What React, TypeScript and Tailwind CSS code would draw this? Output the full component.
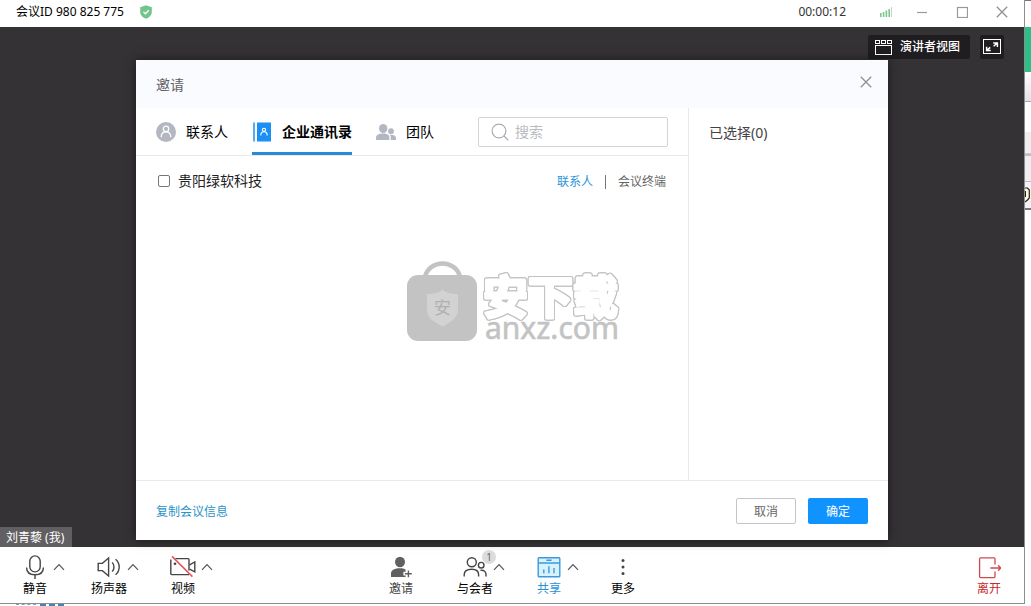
import { useState } from 'react'
import type { ReactNode } from 'react'
import clsx from 'clsx'

type TabId = 'contacts' | 'directory' | 'teams'

function ShieldIcon() {
  return (
    <svg className="w-3 h-3.5" viewBox="0 0 12 14">
      <path d="M6 0.3 11.8 2.2V7C11.8 10.4 9 12.6 6 13.8 3 12.6 0.2 10.4 0.2 7V2.2Z" fill="#72c48a" />
      <path d="M3.4 6.9 5.4 8.8 8.8 5.2" fill="none" stroke="#fff" strokeWidth="1.3" />
    </svg>
  )
}

function SignalIcon() {
  return (
    <svg className="w-3 h-2.5" viewBox="0 0 12 10">
      <path d="M0.8 10V6M3.6 10V5M6.4 10V3.5M9.2 10V2" stroke="#7cc58d" strokeWidth="1.6" />
      <path d="M11.5 10V0" stroke="#cfd2d0" strokeWidth="1" />
    </svg>
  )
}

function CloseIcon() {
  return (
    <svg className="w-3 h-3" viewBox="0 0 12 12">
      <path d="M0.8 0.8 11.2 11.2M11.2 0.8 0.8 11.2" fill="none" stroke="#8f8f94" strokeWidth="1.3" />
    </svg>
  )
}

function MinimizeIcon() {
  return (
    <svg className="w-3 h-3" viewBox="0 0 12 12">
      <path d="M1 6.5H11" stroke="#999" strokeWidth="1.2" />
    </svg>
  )
}

function MaximizeIcon() {
  return (
    <svg className="w-3 h-3" viewBox="0 0 12 12">
      <rect x="1.5" y="1.5" width="10" height="10" fill="none" stroke="#999" strokeWidth="1.2" />
    </svg>
  )
}

function SpeakerViewIcon() {
  return (
    <svg className="w-[18px] h-4" viewBox="0 0 18 16" fill="none" stroke="#fff" strokeWidth="1">
      <rect x="1.5" y="1.5" width="4" height="3" />
      <rect x="7.5" y="1.5" width="4" height="3" />
      <rect x="13.5" y="1.5" width="4" height="3" />
      <rect x="1.5" y="6.5" width="16" height="9" />
    </svg>
  )
}

function ExpandIcon() {
  return (
    <svg className="w-[18px] h-4" viewBox="0 0 18 16" fill="none" stroke="#fff">
      <rect x="0.5" y="0.5" width="17" height="14" />
      <path d="M10.2 3.9H14.4V8M14.2 4.1 10.6 7.3" strokeWidth="1.5" />
      <path d="M3.6 7.8V11.6H7.8M3.8 11.4 7.2 8.4" strokeWidth="1.5" />
    </svg>
  )
}

function ContactIcon() {
  return (
    <svg className="w-5 h-5" viewBox="0 0 20 20">
      <circle cx="10" cy="10" r="10" fill="#b2b7c1" />
      <g fill="none" stroke="#fff" strokeWidth="1.3">
        <circle cx="10" cy="6.9" r="2.7" />
        <path d="M5.2 15.2C5.2 11.4 7 9.9 10 9.9S14.8 11.4 14.8 15.2" />
      </g>
    </svg>
  )
}

function DirectoryIcon() {
  return (
    <svg className="w-5 h-5" viewBox="0 0 20 20">
      <path d="M2 0.5V19.5" stroke="#1a90f5" strokeWidth="1.5" />
      <rect x="5" y="0.5" width="14" height="19" fill="#1a90f5" />
      <g fill="none" stroke="#fff" strokeWidth="1.1">
        <circle cx="12" cy="7.8" r="1.6" />
        <path d="M8.8 13.4C8.8 10.8 10 9.8 12 9.8S15.2 10.8 15.2 13.4" />
      </g>
    </svg>
  )
}

function TeamIcon() {
  return (
    <svg className="w-5 h-5" viewBox="0 0 20 20" fill="#b2b7c1">
      <ellipse cx="7.2" cy="6.5" rx="4.2" ry="4.6" />
      <path d="M0 18V15.4C0 12.8 3.6 11.4 7.2 11.4S13.4 12.8 13.4 15.4V18Z" />
      <circle cx="15" cy="9.2" r="2.9" />
      <path d="M13.4 12.8C17 12.4 20 13.6 20 15.8V18H14.8V15.6C14.8 14.4 14.3 13.5 13.4 12.8Z" />
    </svg>
  )
}

function SearchIcon() {
  return (
    <svg className="w-[18px] h-[18px]" viewBox="0 0 18 18" fill="none" stroke="#a9adb5" strokeWidth="1.2">
      <circle cx="8" cy="8" r="6.9" />
      <path d="M13 13 17.3 17.3" />
    </svg>
  )
}

function MicIcon() {
  return (
    <svg className="w-5 h-6" viewBox="0 0 20 24" fill="none" stroke="#454545" strokeWidth="1.4">
      <rect x="4.8" y="0.9" width="10.4" height="16" rx="5.2" />
      <path d="M1.6 12.5C1.6 17.4 5 19.8 10 19.8S18.4 17.4 18.4 12.5M10 19.8V24" />
    </svg>
  )
}

function SpeakerIcon() {
  return (
    <svg className="w-6 h-6" viewBox="0 0 24 24" fill="none" stroke="#454545" strokeWidth="1.4">
      <path d="M1.2 8.4H5.4L11.6 3V21L5.4 15.6H1.2Z" />
      <path d="M15.2 7.4C17.6 10 17.6 14 15.2 16.6" />
      <path d="M18.6 4.2C23.4 8.4 23.4 15.6 18.6 19.8" />
    </svg>
  )
}

function VideoOffIcon() {
  return (
    <svg className="w-7 h-6 shrink-0" viewBox="0 0 28 24" fill="none" stroke="#454545" strokeWidth="1.4">
      <path d="M6.4 3.6H19C19.6 3.6 20 4 20 4.6V15.4M20 19.6H2.8C2.2 19.6 1.8 19.2 1.8 18.6V4.6" />
      <circle cx="6" cy="8.8" r="1.3" fill="#454545" stroke="none" />
      <path d="M20.6 9.8 25.8 7V16.8L20.6 14.2" />
      <path d="M3 1.4 23.4 21.6" stroke="#e0565b" strokeWidth="1.5" />
    </svg>
  )
}

function InviteIcon() {
  return (
    <svg className="w-6 h-6" viewBox="0 0 24 24">
      <ellipse cx="11" cy="7" rx="5" ry="5.2" fill="#606060" />
      <path d="M2 22V18.6C2 14.8 6 13.2 11 13.2 13.4 13.2 15 13.6 16.6 14.5V16.8H14.4V20.4H16.6V22Z" fill="#606060" />
      <path d="M19.4 15.4V22.2M16 18.8H22.8" stroke="#606060" strokeWidth="1.4" />
    </svg>
  )
}

function ParticipantsIcon() {
  return (
    <svg className="w-6 h-6" viewBox="0 0 24 24" fill="none" stroke="#454545" strokeWidth="1.4">
      <circle cx="8.8" cy="7.3" r="4.5" />
      <path d="M1.2 21.6V19.6C1.2 15.8 4.6 14.2 8.8 14.2S15.6 15.8 15.6 19.6V21.6" />
      <circle cx="18.2" cy="10.2" r="2.8" />
      <path d="M17.4 15.4C21.2 14.8 23 16.8 23 19.6V21.6" />
    </svg>
  )
}

function ShareIcon() {
  return (
    <svg className="w-6 h-6" viewBox="0 0 24 24" fill="none" stroke="#3a9ade" strokeWidth="1.4">
      <rect x="1.2" y="2.7" width="21.6" height="19" rx="0.8" fill="#d8f1ff" />
      <path d="M1.2 8H22.8M9.4 5.3H14.6M6.8 18.2V14.4M11.9 18.2V11.2M17 18.2V13" />
    </svg>
  )
}

function MoreIcon() {
  return (
    <svg className="w-6 h-6" viewBox="0 0 24 24" fill="#454545">
      <circle cx="12" cy="5.4" r="1.5" />
      <circle cx="12" cy="12" r="1.5" />
      <circle cx="12" cy="18.6" r="1.5" />
    </svg>
  )
}

function LeaveIcon() {
  return (
    <svg className="w-6 h-6" viewBox="0 0 24 24" fill="none" stroke="#d0494c" strokeWidth="1.3">
      <path d="M18 9.4V3.8C18 3.2 17.6 2.8 17 2.8H3.6C3 2.8 2.6 3.2 2.6 3.8V21.6C2.6 22.2 3 22.6 3.6 22.6H17C17.6 22.6 18 22.2 18 21.6V16.6" />
      <path d="M13.4 13H23.8M21 10.2 23.8 13 21 15.8" />
    </svg>
  )
}

function ChevronUp() {
  return (
    <svg className="w-3 h-2" viewBox="0 0 12 8" fill="none" stroke="#555" strokeWidth="1.2">
      <path d="M1 6.8 6 1.6 11 6.8" />
    </svg>
  )
}

function Watermark() {
  return (
    <svg
      className="absolute left-[270px] top-[152px] w-[220px] h-[90px] pointer-events-none"
      viewBox="0 0 220 90"
      fontFamily="'Noto Sans', 'Noto Sans CJK SC', sans-serif"
    >
      <path d="M19 17C23 -1 50 -1 54 17" fill="none" stroke="#c3c3c3" strokeWidth="4.5" />
      <rect x="1" y="15" width="70" height="66" rx="11" fill="#c3c3c3" />
      <path d="M36.5 29.5C40 33 46 34 52 34V50C52 58 44 63 36.5 66.5 29 63 21 58 21 50V34C27 34 33 33 36.5 29.5Z" fill="#d2d2d2" />
      <text x="36.5" y="54" fontSize="17" textAnchor="middle" fill="#b0b0b0">安</text>
      <text
        x="77"
        y="54"
        fontSize="45"
        fontWeight="700"
        fill="#fff"
        stroke="#fff"
        strokeWidth="3"
        strokeLinejoin="round"
        className="[filter:drop-shadow(1px_0_0_#c3c3c3)_drop-shadow(-1px_0_0_#c3c3c3)_drop-shadow(0_1px_0_#c3c3c3)_drop-shadow(0_-1px_0_#c3c3c3)]"
      >
        安下载
      </text>
      <text x="79" y="79" fontSize="30" fill="#c3c3c3" stroke="#c3c3c3" strokeWidth="0.6">anxz.com</text>
    </svg>
  )
}

interface ToolItemProps {
  label: string
  icon: ReactNode
  menu?: boolean
  badge?: number
  className?: string
}

function ToolItem({ label, icon, menu, badge, className }: ToolItemProps) {
  return (
    <div className="flex items-start">
      <button type="button" className={clsx('relative w-9 flex flex-col items-center', className)}>
        <span className="h-[26px] flex justify-center">{icon}</span>
        <span className="text-xs leading-4 whitespace-nowrap">{label}</span>
        {badge !== undefined && (
          <span className="absolute left-[25px] -top-[5px] w-3.5 h-3.5 rounded-full bg-[#dcdcdc] text-[10px] leading-3.5 text-center text-[#666]">
            {badge}
          </span>
        )}
      </button>
      {menu && (
        <button type="button" aria-label={label} className="w-3 h-6 flex items-center justify-center">
          <ChevronUp />
        </button>
      )}
    </div>
  )
}

const tabs: { id: TabId; label: string; icon: ReactNode }[] = [
  { id: 'contacts', label: '联系人', icon: <ContactIcon /> },
  { id: 'directory', label: '企业通讯录', icon: <DirectoryIcon /> },
  { id: 'teams', label: '团队', icon: <TeamIcon /> },
]

function InviteDialog() {
  const [activeTab, setActiveTab] = useState<TabId>('directory')
  const [query, setQuery] = useState('')
  const [checked, setChecked] = useState(false)

  return (
    <section
      role="dialog"
      aria-labelledby="invite-title"
      className="w-[752px] max-w-full h-full flex flex-col bg-white shadow-[0_0_10px_rgba(0,0,0,0.5)]"
    >
      <header className="h-12 shrink-0 pl-5 pr-4 flex items-center justify-between bg-[#fafbff]">
        <h2 id="invite-title" className="pt-0.5 text-sm text-[#5f6066]">邀请</h2>
        <button type="button" aria-label="关闭" className="pb-1">
          <CloseIcon />
        </button>
      </header>

      <div className="flex-1 min-h-0 flex">
        <div className="relative flex-1 min-w-0">
          <div className="h-12 px-5 flex items-center justify-between border-b border-[#e6e9ee]">
            <div role="tablist" className="h-full flex gap-6">
              {tabs.map((tab) => (
                <button
                  key={tab.id}
                  type="button"
                  role="tab"
                  aria-selected={activeTab === tab.id}
                  onClick={() => setActiveTab(tab.id)}
                  className={clsx(
                    'h-full flex items-center gap-2.5 text-sm text-black border-y-3 border-t-transparent',
                    activeTab === tab.id ? 'font-bold border-b-[#2a8ad6]' : 'border-b-transparent'
                  )}
                >
                  {tab.icon}
                  {tab.label}
                </button>
              ))}
            </div>
            <label className="w-[190px] h-[30px] pl-3 flex items-center gap-1.5 border border-[#d3d5d9] rounded-xs">
              <SearchIcon />
              <input
                type="text"
                aria-label="搜索"
                placeholder="搜索"
                value={query}
                onChange={(e) => setQuery(e.target.value)}
                className="flex-1 min-w-0 text-sm outline-none placeholder:text-[#b9bbc0]"
              />
            </label>
          </div>

          <div className="h-[50px] px-[22px] flex items-center justify-between">
            <label className="flex items-center gap-2 text-sm text-[#222]">
              <input
                type="checkbox"
                checked={checked}
                onChange={(e) => setChecked(e.target.checked)}
                className="w-3 h-3 appearance-none border border-[#777] rounded-xs checked:bg-[#1890ff]"
              />
              贵阳绿软科技
            </label>
            <div className="pt-0.5 flex items-center gap-3 text-xs">
              <button type="button" className="text-[#2a93d8]">联系人</button>
              <span className="w-px h-3.5 bg-[#777]" />
              <button type="button" className="text-[#666]">会议终端</button>
            </div>
          </div>

          <Watermark />
        </div>

        <aside className="w-[200px] px-5 py-[15px] border-l border-[#e6e9ee] text-sm text-[#444]">
          已选择(0)
        </aside>
      </div>

      <footer className="h-[60px] shrink-0 px-5 flex items-center justify-between border-t border-[#e9eaec] text-xs">
        <a href="#copy" className="pt-0.5 text-[#2a93c8]">复制会议信息</a>
        <div className="flex gap-3">
          <button type="button" className="w-[60px] h-[26px] pt-0.5 border border-[#c4c5c8] rounded-xs text-[#666]">
            取消
          </button>
          <button type="button" className="w-[60px] h-[26px] pt-0.5 bg-[#1193ff] rounded-xs text-white">
            确定
          </button>
        </div>
      </footer>
    </section>
  )
}

// Slice of the desktop that stays visible to the right of the window
function DesktopEdge() {
  return (
    <div className="w-1.5 shrink-0 flex flex-col bg-white overflow-hidden">
      <div className="h-[27px] border-t border-[#777]" />
      <div className="h-[45px] bg-[#2bc088]" />
      <div className="h-[30px] bg-linear-to-b from-white to-[#e2e2ea] border-b border-[#aaa]" />
      <div className="h-[30px]" />
      <div className="h-[22px] bg-[#efeef3] border-b border-[#c9c9ce]" />
      <div className="h-7 bg-[#efeef3] border-t-2 border-b border-[#bdbdc2]" />
      <div className="h-7 bg-[#f3f2f6] border-b-2 border-[#77777c] flex items-center">
        <svg className="w-[5px] h-4" viewBox="0 0 5 16">
          <path d="M0 1H2.5L4.3 3V11L2.5 13L0 15" fill="#fdfbd8" stroke="#222" strokeWidth="1.2" />
          <path d="M0.5 4V10" stroke="#222" />
        </svg>
      </div>
    </div>
  )
}

export default function App() {
  return (
    <div className="h-screen flex flex-col overflow-hidden bg-white font-['Noto_Sans','Noto_Sans_CJK_SC',sans-serif] text-black">
      <div className="flex-1 min-h-0 flex">
        <div className="flex-1 min-w-0 flex flex-col border-r border-b border-[#8e8e90]">
          <header className="h-[27px] shrink-0 pl-4 pr-4 flex items-center justify-between text-xs leading-6 pb-[3px]">
            <div className="flex items-center gap-4">
              <span>会议ID 980 825 775</span>
              <ShieldIcon />
            </div>
            <div className="flex items-center">
              <span className="mr-[34px] text-[#333]">00:00:12</span>
              <span className="mr-6">
                <SignalIcon />
              </span>
              <div className="flex gap-7">
                <button type="button" aria-label="最小化">
                  <MinimizeIcon />
                </button>
                <button type="button" aria-label="最大化">
                  <MaximizeIcon />
                </button>
                <button type="button" aria-label="关闭窗口">
                  <CloseIcon />
                </button>
              </div>
            </div>
          </header>

          <main className="relative flex-1 min-h-0 flex flex-col justify-between bg-[#353235]">
            <div className="pt-2 pr-5 flex justify-end gap-2.5 text-xs text-white">
              <button type="button" className="h-6 pl-1.5 pr-2.5 flex items-center gap-2 bg-[#1f1d1f] rounded-xs font-medium">
                <SpeakerViewIcon />
                演讲者视图
              </button>
              <button type="button" aria-label="全屏" className="w-6 h-6 flex items-center justify-center bg-[#1f1d1f] rounded-xs">
                <ExpandIcon />
              </button>
            </div>
            <div className="self-start h-5 pl-1.5 pr-2 pt-px bg-[#625f62] text-xs leading-5 text-white">刘青藜 (我)</div>

            <div className="absolute inset-x-0 top-[33px] bottom-[7px] flex justify-center">
              <InviteDialog />
            </div>
          </main>

          <footer className="h-14 shrink-0 px-[17px] pt-2 grid grid-cols-[1fr_auto_1fr]">
            <div className="flex gap-[26px]">
              <ToolItem label="静音" icon={<MicIcon />} menu />
              <ToolItem label="扬声器" icon={<SpeakerIcon />} menu />
              <ToolItem label="视频" icon={<VideoOffIcon />} menu />
            </div>
            <div className="flex">
              <div className="w-[74px]">
                <ToolItem label="邀请" icon={<InviteIcon />} className="text-[#444]" />
              </div>
              <div className="w-[74px]">
                <ToolItem label="与会者" icon={<ParticipantsIcon />} menu badge={1} />
              </div>
              <div className="w-[74px]">
                <ToolItem label="共享" icon={<ShareIcon />} menu className="text-[#2a93d8]" />
              </div>
              <ToolItem label="更多" icon={<MoreIcon />} />
            </div>
            <div className="flex justify-end">
              <ToolItem label="离开" icon={<LeaveIcon />} className="text-[#c8282d]" />
            </div>
          </footer>
        </div>
        <DesktopEdge />
      </div>

      {/* Desktop showing below the window */}
      <div className="h-0.5 shrink-0 pl-4 flex gap-1">
        <span className="w-5 border-t border-dashed border-[#6fa6c8]" />
        <span className="w-6 border-t-2 border-dashed border-[#3f86b0]" />
      </div>
    </div>
  )
}
